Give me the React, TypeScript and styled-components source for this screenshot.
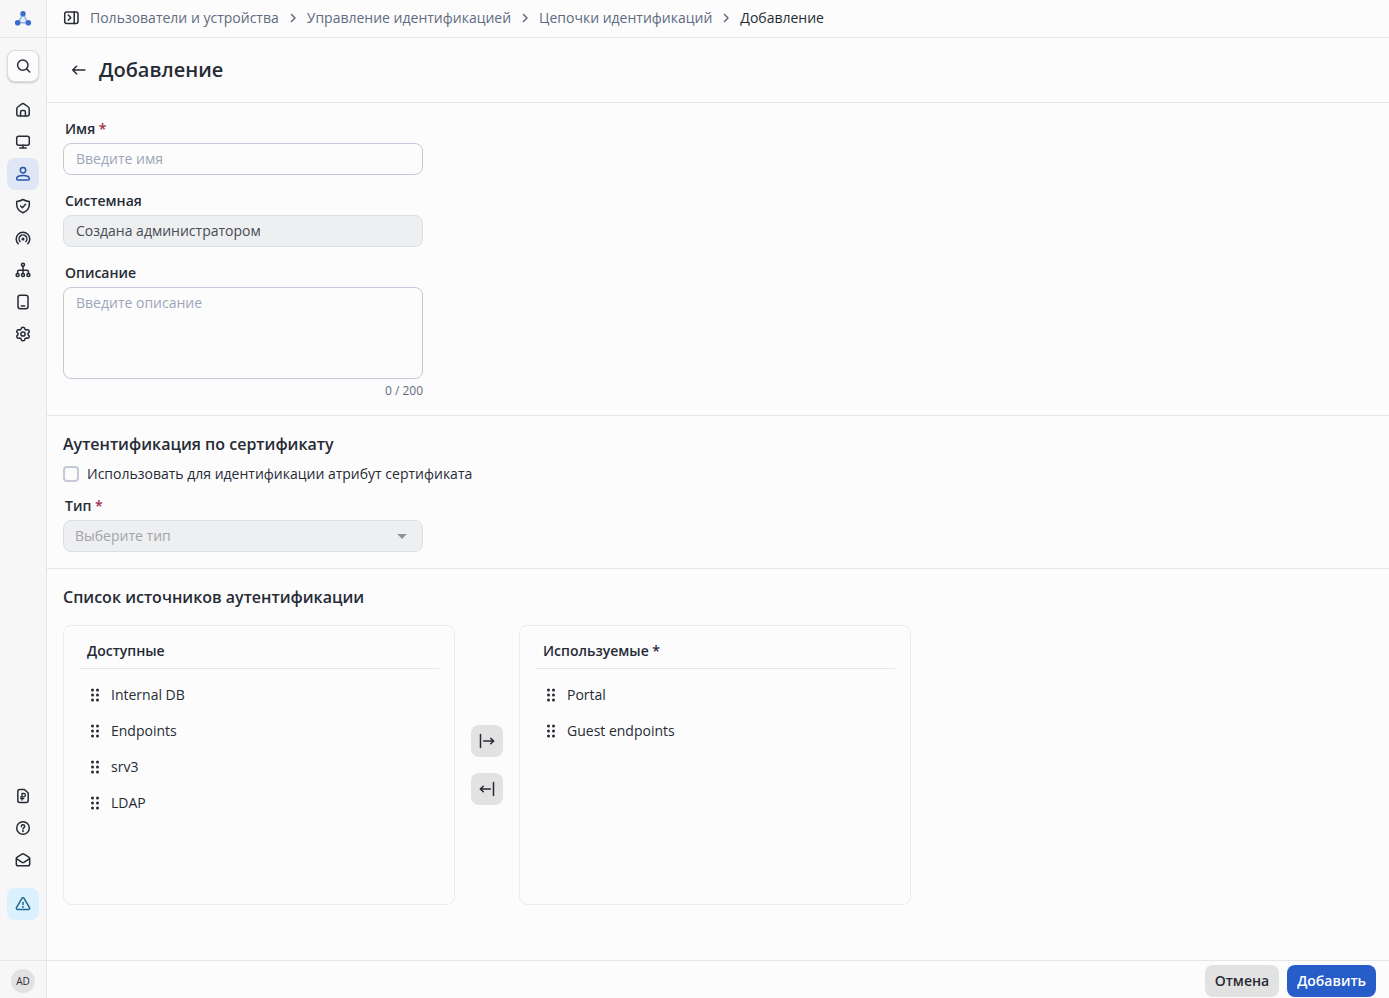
import React, { useState } from "react";
import styled, { createGlobalStyle, css } from "styled-components";

const color = {
  page: "#fcfcfd",
  sidebar: "#f7f7f8",
  line: "#e6e6ea",
  panelLine: "#ececf0",
  inputLine: "#c5c8d6",
  disabledLine: "#dcdee6",
  disabled: "#eeeff1",
  text: "#272b35",
  muted: "#5f6b80",
  placeholder: "#9da6b8",
  grey: "#e2e2e2",
  primary: "#265dc9",
  danger: "#a12f45",
};

const GlobalStyle = createGlobalStyle`
  *, *::before, *::after { box-sizing: border-box; }
  body {
    margin: 0;
    background: ${color.page};
    color: ${color.text};
    font-family: "Open Sans", "Noto Sans", sans-serif;
    font-size: 14px;
    line-height: 20px;
  }
  button, input, textarea, select { font: inherit; color: inherit; }
  h1, h2, h3, ul, ol { margin: 0; padding: 0; }
  ul, ol { list-style: none; }
  a { color: inherit; text-decoration: none; }
`;

const Layout = styled.div`
  display: flex;
  min-height: 100vh;
`;

const Sidebar = styled.aside`
  display: flex;
  flex-direction: column;
  flex: none;
  width: 47px;
  background: ${color.sidebar};
  border-right: 1px solid ${color.line};
`;

const LogoLink = styled.a`
  display: flex;
  align-items: center;
  justify-content: center;
  height: 38px;
  border-bottom: 1px solid ${color.line};
`;

const SidebarBody = styled.div`
  display: flex;
  flex: 1;
  flex-direction: column;
  align-items: center;
  padding: 12px 0 40px;
`;

const iconBox = css`
  display: flex;
  align-items: center;
  justify-content: center;
  width: 32px;
  height: 32px;
  padding: 0;
  border: 0;
  border-radius: 8px;
`;

const SearchButton = styled.button`
  ${iconBox}
  background: ${color.page};
  border: 1px solid #dcdce0;
  box-shadow: 0 1px 2px rgba(0, 0, 0, 0.2);
`;

const NavList = styled.ul`
  margin-top: 12px;
`;

const BottomList = styled.ul`
  margin-top: auto;
  margin-bottom: 12px;
`;

const NavLink = styled.a<{ $active?: boolean }>`
  ${iconBox}
  background: ${(p) => (p.$active ? "#dfe6f6" : "transparent")};
  color: ${(p) => (p.$active ? "#2754ad" : color.text)};
`;

const AlertButton = styled.button`
  ${iconBox}
  background: #dbf2fe;
  color: #1f6690;
`;

const Account = styled.div`
  display: flex;
  align-items: center;
  justify-content: center;
  height: 38px;
  padding-top: 2px;
  border-top: 1px solid ${color.line};
`;

const Avatar = styled.button`
  width: 24px;
  height: 24px;
  padding: 0;
  border: 0;
  border-radius: 50%;
  background: ${color.grey};
  font-size: 10px;
  line-height: 24px;
`;

const Page = styled.div`
  display: flex;
  flex: 1;
  flex-direction: column;
  min-width: 0;
`;

const TopBar = styled.header`
  display: flex;
  align-items: center;
  gap: 11px;
  height: 38px;
  padding: 0 16px 2px;
  border-bottom: 1px solid ${color.line};
`;

const PlainButton = styled.button`
  display: flex;
  padding: 0;
  border: 0;
  background: none;
`;

const Crumbs = styled.ol`
  display: flex;
  align-items: center;
`;

const Crumb = styled.li`
  display: flex;
  align-items: center;
  gap: 6px;
  color: ${color.muted};

  &:not(:last-child) {
    margin-right: 6px;
  }

  &:last-child {
    color: ${color.text};
  }
`;

const TitleBar = styled.div`
  display: flex;
  align-items: center;
  gap: 12px;
  height: 65px;
  padding: 0 24px;
  border-bottom: 1px solid ${color.line};
`;

const Title = styled.h1`
  font-size: 20px;
  line-height: 28px;
  font-weight: 600;
`;

const Form = styled.form`
  display: flex;
  flex: 1;
  flex-direction: column;
`;

const Section = styled.section<{ $gap: number }>`
  display: flex;
  flex-direction: column;
  align-items: flex-start;
  gap: ${(p) => p.$gap}px;
  padding: 16px;

  & + & {
    border-top: 1px solid ${color.line};
  }
`;

const SectionTitle = styled.h2`
  font-size: 16px;
  line-height: 24px;
  font-weight: 600;
`;

const Field = styled.div`
  display: flex;
  flex-direction: column;
  gap: 4px;
  width: 100%;
  max-width: 360px;
`;

const Label = styled.label`
  padding-left: 2px;
  font-weight: 600;
`;

const Required = styled.span`
  color: ${color.danger};
`;

const control = css`
  display: block;
  width: 100%;
  border: 1px solid ${color.inputLine};
  border-radius: 8px;
  background: ${color.page};
  outline: none;

  &::placeholder {
    color: ${color.placeholder};
    opacity: 1;
  }

  &:focus {
    border-color: ${color.primary};
  }

  &:disabled {
    background: ${color.disabled};
    border-color: ${color.disabledLine};
    color: #484b52;
    opacity: 1;
  }
`;

const Input = styled.input`
  ${control}
  height: 32px;
  padding: 0 12px 2px;
`;

const TextArea = styled.textarea`
  ${control}
  height: 92px;
  padding: 5px 12px;
  resize: none;
`;

const Counter = styled.span`
  align-self: flex-end;
  color: ${color.muted};
  font-size: 12px;
  line-height: 16px;
`;

const SelectWrap = styled.div`
  position: relative;

  svg {
    position: absolute;
    top: 8px;
    right: 13px;
    color: #929292;
    pointer-events: none;
  }
`;

const Select = styled.select`
  ${control}
  height: 32px;
  padding: 0 32px 0 11px;
  appearance: none;

  &:disabled {
    color: #a2a4a8;
  }
`;

const CheckRow = styled.label`
  display: flex;
  align-items: center;
  gap: 8px;
  margin-bottom: 4px;
`;

const Checkbox = styled.input`
  width: 16px;
  height: 16px;
  margin: 0;
  appearance: none;
  border: 2px solid ${color.inputLine};
  border-radius: 4px;
  background: ${color.page};

  &:checked {
    background: ${color.primary};
    border-color: ${color.primary};
  }
`;

const Transfer = styled.div`
  display: flex;
  align-items: center;
  gap: 16px;
  width: 100%;
`;

const Panel = styled.div`
  flex: 0 1 392px;
  min-height: 280px;
  padding: 15px;
  border: 1px solid ${color.panelLine};
  border-radius: 8px;
`;

const PanelTitle = styled.h3`
  margin-bottom: 8px;
  padding: 0 8px 7px;
  border-bottom: 1px solid ${color.line};
  font-size: 14px;
  line-height: 20px;
  font-weight: 600;
`;

const Source = styled.li`
  display: flex;
  align-items: center;
  gap: 8px;
  height: 36px;
  padding: 0 8px;
  cursor: grab;
`;

const MoveButtons = styled.div`
  display: flex;
  flex-direction: column;
  gap: 16px;
`;

const MoveButton = styled.button`
  ${iconBox}
  background: ${color.grey};
`;

const Footer = styled.footer`
  display: flex;
  justify-content: flex-end;
  gap: 8px;
  margin-top: auto;
  padding: 4px 13px 1px;
  border-top: 1px solid ${color.line};
`;

const Button = styled.button<{ $primary?: boolean }>`
  height: 32px;
  padding: 0 10px;
  border: 0;
  border-radius: 8px;
  background: ${(p) => (p.$primary ? color.primary : color.grey)};
  color: ${(p) => (p.$primary ? "#fff" : color.text)};
  font-weight: 600;
`;

const Icon = ({ children }: { children: React.ReactNode }) => (
  <svg
    width="16"
    height="16"
    viewBox="0 0 16 16"
    fill="none"
    stroke="currentColor"
    strokeWidth="1.5"
    strokeLinecap="round"
    strokeLinejoin="round"
    aria-hidden="true"
  >
    {children}
  </svg>
);

const Logo = () => (
  <svg width="18" height="16" viewBox="0 0 18 16" aria-hidden="true">
    <path d="M9 3 4 11.800h10Z" fill="#e6edfa" stroke="#8faee8" strokeWidth="1.400" />
    <g fill="#3a6bcd">
      <circle cx="9" cy="2.800" r="2.700" />
      <circle cx="3.700" cy="11.800" r="2.800" />
      <circle cx="14.300" cy="11.800" r="2.800" />
    </g>
  </svg>
);

const icons = {
  search: (
    <Icon>
      <circle cx="7.800" cy="7.100" r="5.200" />
      <path d="m11.700 11 3 3" />
    </Icon>
  ),
  home: (
    <Icon>
      <path d="M1.800 6.700c0-.7.300-1.300.9-1.700l3.900-2.900c.8-.6 1.900-.6 2.700 0L13.300 5c.6.400.9 1 .9 1.700V12c0 1.100-.9 2-2 2H3.800c-1.100 0-2-.9-2-2Z" />
      <path d="M5.600 13.800V10c0-.9.600-1.500 1.500-1.500h1.800c.9 0 1.500.6 1.500 1.500v3.800" />
    </Icon>
  ),
  monitor: (
    <Icon>
      <rect x="1.700" y="2.300" width="12.600" height="9" rx="2" />
      <path d="M8 11.300v2.500M4.800 14h6.400" />
    </Icon>
  ),
  user: (
    <Icon>
      <circle cx="8" cy="4.200" r="2.700" />
      <path d="M1.600 12.700C1.600 10.600 4.600 9.400 8 9.400s6.400 1.200 6.400 3.300c0 .8-.5 1.300-1.300 1.300H2.900c-.8 0-1.300-.5-1.300-1.300Z" />
    </Icon>
  ),
  shield: (
    <Icon>
      <path d="M8 1.500c2 1.200 3.900 1.800 6.300 2v3.300c0 3.600-2.300 6.300-6.300 7.900-4-1.600-6.300-4.300-6.300-7.900V3.500c2.400-.2 4.300-.8 6.300-2Z" />
      <path d="m5.600 8 1.800 1.800 3.200-3.500" />
    </Icon>
  ),
  signal: (
    <Icon>
      <path d="M3.200 13.800a6.800 6.800 0 1 1 9.600 0" />
      <path d="M5.100 11.500a3.900 3.900 0 1 1 5.800 0" />
      <circle cx="8" cy="9" r=".8" fill="currentColor" />
    </Icon>
  ),
  tree: (
    <Icon>
      <circle cx="8" cy="2.800" r="1.500" />
      <circle cx="2.600" cy="12.900" r="1.500" />
      <circle cx="8" cy="12.900" r="1.500" />
      <circle cx="13.400" cy="12.900" r="1.500" />
      <path d="M8 4.300v7.100M2.600 11.400V9.700c0-.9.600-1.500 1.500-1.500h7.800c.9 0 1.500.6 1.500 1.500v1.700" />
    </Icon>
  ),
  device: (
    <Icon>
      <rect x="3" y="1.300" width="10" height="13.400" rx="2.200" />
      <path d="M6.300 12h3.400" />
    </Icon>
  ),
  gear: (
    <Icon>
      <path d="M6.300 2.300c.2-.7.800-1.100 1.700-1.100s1.500.4 1.700 1.100l.3 1 1.200.7 1-.3c.8-.2 1.400.1 1.800.9s.4 1.500-.2 2l-.8.700v1.400l.8.700c.6.500.6 1.200.2 2s-1 1.100-1.800.9l-1-.3-1.200.7-.3 1c-.2.700-.8 1.100-1.700 1.100s-1.500-.4-1.700-1.100l-.3-1-1.200-.7-1 .3c-.8.200-1.400-.1-1.800-.9s-.4-1.500.2-2l.8-.7V7.300l-.8-.7c-.6-.5-.6-1.200-.2-2s1-1.100 1.800-.9l1 .3L6 3.300Z" />
      <circle cx="8" cy="8" r="2.100" />
    </Icon>
  ),
  license: (
    <Icon>
      <path d="M4.800 1.500h4.600L13.200 5v7.500c0 1.100-.9 2-2 2H4.800c-1.100 0-2-.9-2-2v-9c0-1.100.9-2 2-2Z" />
      <path d="M7 12V5.500h1.700a1.700 1.700 0 0 1 0 3.400H5.600M5.600 10.600h3.200" strokeWidth="1.300" />
    </Icon>
  ),
  help: (
    <Icon>
      <circle cx="8" cy="8" r="6.300" />
      <path d="M6.300 6.500c0-1 .7-1.700 1.700-1.700s1.700.7 1.700 1.600c0 1.200-1.700 1.300-1.700 2.500" />
      <circle cx="8" cy="11.100" r=".3" fill="currentColor" />
    </Icon>
  ),
  mail: (
    <Icon>
      <path d="M1.300 6.600c0-.6.300-1.100.9-1.400L7 2.200c.6-.4 1.400-.4 2 0l4.800 3c.6.300.9.800.9 1.400V12c0 1-.8 1.800-1.800 1.800H3.100c-1 0-1.800-.8-1.800-1.800Z" />
      <path d="m1.800 6.800 4.900 3.300c.8.500 1.800.5 2.600 0l4.900-3.300" />
    </Icon>
  ),
  alert: (
    <Icon>
      <path d="M6.900 2.300c.5-.8 1.700-.8 2.200 0l5.400 9.400c.5.900-.1 1.900-1.100 1.900H2.600c-1 0-1.600-1-1.100-1.900Z" />
      <path d="M8 6.400v2.200" />
      <circle cx="8" cy="11" r=".3" fill="currentColor" />
    </Icon>
  ),
  expand: (
    <Icon>
      <rect x="1.700" y="1.900" width="13.300" height="11.600" rx="2" />
      <path d="M11.200 1.900v11.600M5.300 5.100l2.500 2.600-2.500 2.600" />
    </Icon>
  ),
  chevron: (
    <Icon>
      <path d="m6.500 4.500 3.500 3.500-3.500 3.500" />
    </Icon>
  ),
  back: (
    <Icon>
      <path d="M13.900 8H1.700M5.600 4.200 1.700 8l3.900 3.800" />
    </Icon>
  ),
  toRight: (
    <Icon>
      <path d="M1.500 1.500v13M4.700 8h10M11.700 5.200 14.700 8l-3 2.800" />
    </Icon>
  ),
  toLeft: (
    <Icon>
      <path d="M14.500 1.500v13M11.300 8h-10M4.300 5.200 1.300 8l3 2.800" />
    </Icon>
  ),
  caret: (
    <svg width="16" height="16" viewBox="0 0 16 16" aria-hidden="true">
      <path d="M3.300 6h9.400L8 11Z" fill="currentColor" />
    </svg>
  ),
  grip: (
    <svg width="16" height="16" viewBox="0 0 16 16" fill="currentColor" aria-hidden="true">
      {[3, 8, 13].map((y) => (
        <React.Fragment key={y}>
          <circle cx="5.500" cy={y} r="1.500" />
          <circle cx="10.500" cy={y} r="1.500" />
        </React.Fragment>
      ))}
    </svg>
  ),
};

const mainNav = [
  { label: "Главная", icon: icons.home },
  { label: "Мониторинг", icon: icons.monitor },
  { label: "Пользователи и устройства", icon: icons.user, active: true },
  { label: "Политики", icon: icons.shield },
  { label: "Гостевой доступ", icon: icons.signal },
  { label: "Сеть", icon: icons.tree },
  { label: "Устройства", icon: icons.device },
  { label: "Настройки", icon: icons.gear },
];

const bottomNav = [
  { label: "Лицензия", icon: icons.license },
  { label: "Справка", icon: icons.help },
  { label: "Обратная связь", icon: icons.mail },
];

const crumbs = ["Пользователи и устройства", "Управление идентификацией", "Цепочки идентификаций"];

const SourcePanel = ({ title, items }: { title: string; items: string[] }) => (
  <Panel>
    <PanelTitle>{title}</PanelTitle>
    <ul>
      {items.map((item) => (
        <Source key={item} draggable>
          {icons.grip}
          {item}
        </Source>
      ))}
    </ul>
  </Panel>
);

export default function App() {
  const [description, setDescription] = useState("");
  const [useCertificate, setUseCertificate] = useState(false);

  return (
    <>
      <GlobalStyle />
      <Layout>
        <Sidebar>
          <LogoLink href="#" aria-label="На главную">
            <Logo />
          </LogoLink>
          <SidebarBody>
            <SearchButton type="button" aria-label="Поиск">
              {icons.search}
            </SearchButton>
            <NavList>
              {mainNav.map((item) => (
                <li key={item.label}>
                  <NavLink href="#" aria-label={item.label} $active={item.active}>
                    {item.icon}
                  </NavLink>
                </li>
              ))}
            </NavList>
            <BottomList>
              {bottomNav.map((item) => (
                <li key={item.label}>
                  <NavLink href="#" aria-label={item.label}>
                    {item.icon}
                  </NavLink>
                </li>
              ))}
            </BottomList>
            <AlertButton type="button" aria-label="Предупреждения">
              {icons.alert}
            </AlertButton>
          </SidebarBody>
          <Account>
            <Avatar type="button">AD</Avatar>
          </Account>
        </Sidebar>

        <Page>
          <TopBar>
            <PlainButton type="button" aria-label="Развернуть меню">
              {icons.expand}
            </PlainButton>
            <nav aria-label="Навигация">
              <Crumbs>
                {crumbs.map((crumb) => (
                  <Crumb key={crumb}>
                    <a href="#">{crumb}</a>
                    {icons.chevron}
                  </Crumb>
                ))}
                <Crumb aria-current="page">Добавление</Crumb>
              </Crumbs>
            </nav>
          </TopBar>
          <TitleBar>
            <PlainButton type="button" aria-label="Назад">
              {icons.back}
            </PlainButton>
            <Title>Добавление</Title>
          </TitleBar>

          <Form onSubmit={(e) => e.preventDefault()}>
            <Section $gap={16}>
              <Field>
                <Label htmlFor="name">
                  Имя <Required>*</Required>
                </Label>
                <Input id="name" placeholder="Введите имя" />
              </Field>
              <Field>
                <Label htmlFor="system">Системная</Label>
                <Input id="system" value="Создана администратором" disabled readOnly />
              </Field>
              <Field>
                <Label htmlFor="description">Описание</Label>
                <TextArea
                  id="description"
                  placeholder="Введите описание"
                  maxLength={200}
                  value={description}
                  onChange={(e) => setDescription(e.target.value)}
                />
                <Counter>{description.length} / 200</Counter>
              </Field>
            </Section>

            <Section $gap={8}>
              <SectionTitle>Аутентификация по сертификату</SectionTitle>
              <CheckRow>
                <Checkbox
                  type="checkbox"
                  checked={useCertificate}
                  onChange={(e) => setUseCertificate(e.target.checked)}
                />
                Использовать для идентификации атрибут сертификата
              </CheckRow>
              <Field>
                <Label htmlFor="type">
                  Тип <Required>*</Required>
                </Label>
                <SelectWrap>
                  <Select id="type" disabled={!useCertificate}>
                    <option>Выберите тип</option>
                  </Select>
                  {icons.caret}
                </SelectWrap>
              </Field>
            </Section>

            <Section $gap={16}>
              <SectionTitle>Список источников аутентификации</SectionTitle>
              <Transfer>
                <SourcePanel title="Доступные" items={["Internal DB", "Endpoints", "srv3", "LDAP"]} />
                <MoveButtons>
                  <MoveButton type="button" aria-label="Добавить в используемые">
                    {icons.toRight}
                  </MoveButton>
                  <MoveButton type="button" aria-label="Убрать из используемых">
                    {icons.toLeft}
                  </MoveButton>
                </MoveButtons>
                <SourcePanel title="Используемые *" items={["Portal", "Guest endpoints"]} />
              </Transfer>
            </Section>

            <Footer>
              <Button type="button">Отмена</Button>
              <Button type="submit" $primary>
                Добавить
              </Button>
            </Footer>
          </Form>
        </Page>
      </Layout>
    </>
  );
}
